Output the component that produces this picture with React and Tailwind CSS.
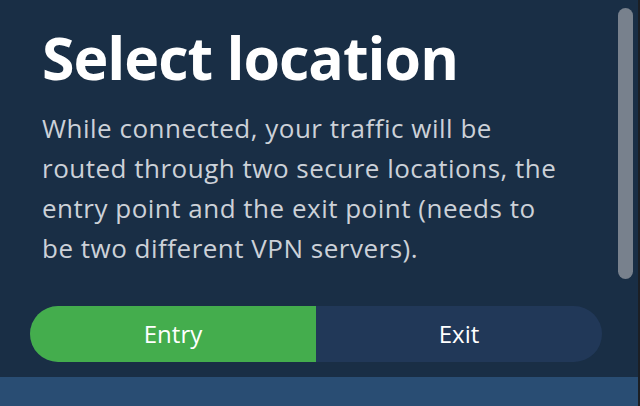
import React from 'react';

const App = () => {
  return (
    <div className="relative w-[640px] h-[406px] overflow-hidden bg-[#192e45] flex flex-col font-['Open_Sans',sans-serif]">
      <div className="flex-1 flex flex-col">
        <div className="pl-[42px] pt-[22px]">
          <h1 className="text-[59px] leading-[70px] font-bold text-white tracking-[-1px]">
            Select location
          </h1>
          <p className="mt-[16px] text-[26px] leading-[40px] tracking-[0.5px] text-[#ccd1d8]">
            While connected, your traffic will be<br />
            routed through two secure locations, the<br />
            entry point and the exit point (needs to<br />
            be two different VPN servers).
          </p>
        </div>

        {/* Entry / Exit switch */}
        <div className="mt-[38px] ml-[30px] w-[572px] h-[56px] rounded-full overflow-hidden flex bg-[#213858]">
          <button className="w-[286px] h-full bg-[#44ad4d] text-white text-[24px] font-medium">
            Entry
          </button>
          <button className="flex-1 h-full text-white text-[24px] font-medium">
            Exit
          </button>
        </div>
      </div>

      <div className="h-[29px] bg-[#294d73]"></div>

      {/* scrollbar thumb */}
      <div className="absolute right-[7px] top-[8px] w-[15px] h-[271px] rounded-full bg-[#78818d]"></div>
      <div className="absolute right-0 top-0 bottom-0 w-[2px] bg-[#1c1f24]"></div>
    </div>
  );
};

export default App;
